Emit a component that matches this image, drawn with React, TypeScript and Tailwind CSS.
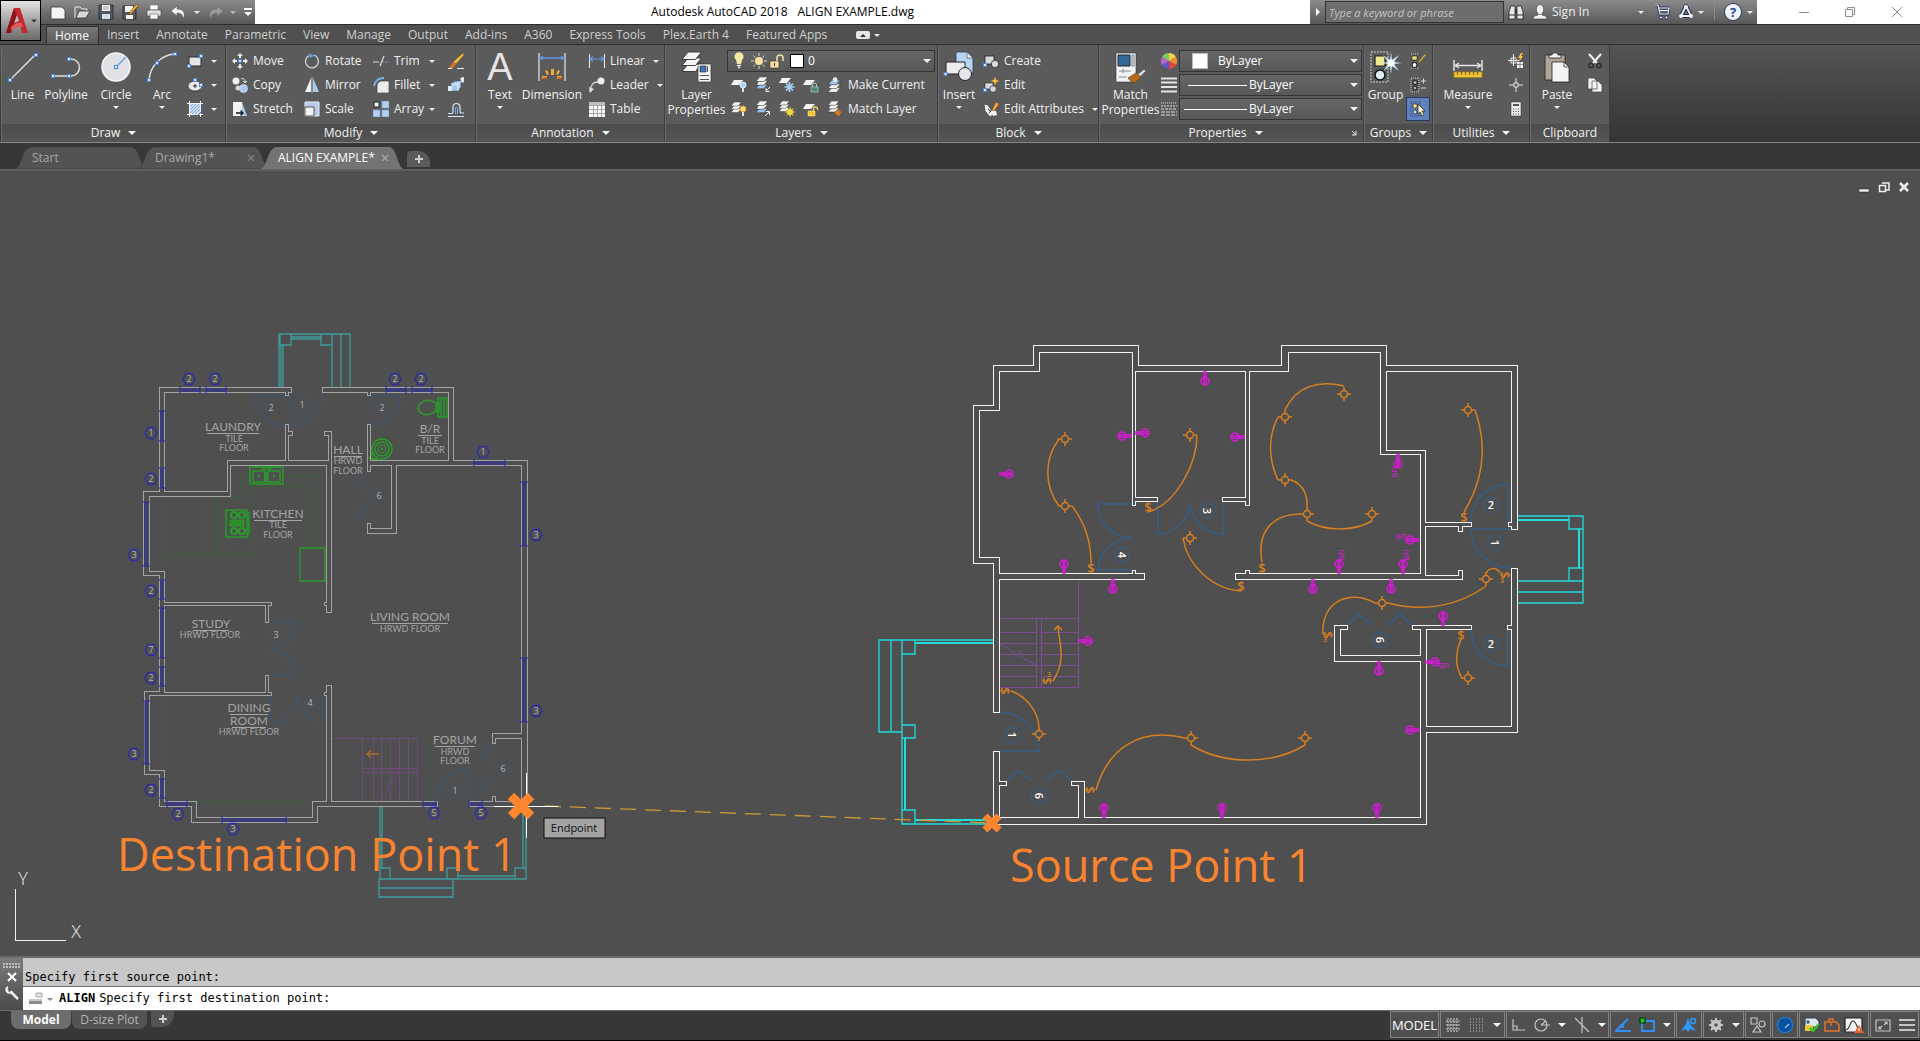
import { useState, type ReactNode } from "react";

/* ---------- small helpers ---------- */

function Caret({ big = false }: { big?: boolean }) {
  return big ? (
    <svg viewBox="0 0 8 4" className="h-1 w-2 shrink-0" fill="#f4f4f4"><path d="M0 0h8L4 4z" /></svg>
  ) : (
    <svg viewBox="0 0 6 3" className="h-[3px] w-1.5 shrink-0" fill="#ececec"><path d="M0 0h6L3 3z" /></svg>
  );
}

function Ico({ children, size = 16 }: { children: ReactNode; size?: 16 | 32 }) {
  return (
    <svg viewBox={`0 0 ${size} ${size}`} className={size === 32 ? "h-8 w-8 shrink-0" : "h-4 w-4 shrink-0"} fill="none">
      {children}
    </svg>
  );
}

function Grip({ x, y }: { x: number; y: number }) {
  return <rect x={x - 1.5} y={y - 1.5} width="3" height="3" fill="#dbe9ff" stroke="#4f86d9" />;
}

function Sheets({ blue = -1, s = 1, x = 0, y = 0 }: { blue?: number; s?: number; x?: number; y?: number }) {
  return (
    <g transform={`translate(${x} ${y}) scale(${s})`} stroke="#2f2f2f" strokeWidth=".6">
      {[2, 1, 0].map((i) => (
        <path key={i} d={`M4 ${i * 4}h9l-4 5H0z`} fill={blue === i ? "#9cc4f2" : "#f5f5f5"} />
      ))}
    </g>
  );
}

/* ---------- ribbon icons ---------- */

const icons: Record<string, ReactNode> = {
  line: <><path d="M3 29L29 3" stroke="#e8e8e8" strokeWidth="1.3" /><Grip x={3} y={29} /><Grip x={29} y={4} /></>,
  polyline: <><path d="M3 25h18a8.5 8.500 0 0 0 0-17h-2" stroke="#e0e0e0" strokeWidth="1.5" /><Grip x={3} y={25} /><Grip x={19} y={25} /><Grip x={19} y={8} /></>,
  circle: <><circle cx="16" cy="16" r="14" fill="#dfe1e4" stroke="#f6f6f6" strokeWidth="1.5" /><path d="M16 16l10-10" stroke="#6a9fe6" strokeWidth="1.5" /><Grip x={16} y={16} /></>,
  arc: <><path d="M3 29C4 16 14 4 29 3" stroke="#e0e0e0" strokeWidth="1.5" /><Grip x={3} y={29} /><Grip x={11} y={12} /><Grip x={29} y={3} /></>,
  rect: <><rect x="2" y="4" width="12" height="9" fill="#e4e5e8" stroke="#2d2d2d" /><Grip x={2} y={13} /><Grip x={14} y={3} /></>,
  ellipse: <><ellipse cx="8" cy="9" rx="7" ry="5" fill="#e8e8e8" stroke="#2d2d2d" strokeWidth=".7" /><path d="M8 7v4M6 9h4" stroke="#333" /><Grip x={8} y={3} /><Grip x={14} y={8} /></>,
  hatch: <><rect x="3" y="3" width="10" height="10" fill="#cfe2fb" /><path d="M3 6l3-3M3 9l6-6M3 12l9-9M5 13l8-8M8 13l5-5" stroke="#6fa0df" strokeWidth=".9" /><path d="M2.500 0v16M13.500 0v16M0 2.500h16M0 13.500h16" stroke="#f0f0f0" /><path d="M9 16l7-7" stroke="#3c70bd" /></>,
  move: <><path d="M8 0l3 3H9v2H7V3H5zM8 16l3-3H9v-2H7v2H5zM0 8l3-3v2h2v2H3v2zM16 8l-3-3v2h-2v2h2v2z" fill="#ededed" /><Grip x={8} y={8} /></>,
  rotate: <><path d="M10 2.200a6.500 6.500 0 1 1-5 .4" stroke="#d4d4d4" strokeWidth="1.300" /><path d="M5 0l5 2.500-4 3z" fill="#5f9be8" /></>,
  trim: <><path d="M0 9h6M7 13l4-10" stroke="#dedede" strokeWidth="1.200" /><path d="M9 9h7" stroke="#6ca1e8" strokeWidth="1.200" strokeDasharray="2 1" /></>,
  erase: <><path d="M15 0l1 2-8 9-3-2z" fill="#f0bd4b" stroke="#7a4d10" strokeWidth=".5" /><path d="M5 9l3 2-3 4H1z" fill="#d4702b" /><path d="M0 15.500h4M9 15.500h7" stroke="#eee" /></>,
  copy: <><circle cx="4" cy="4" r="3.500" fill="#f2f2f2" /><circle cx="6" cy="11" r="2.500" fill="#d4d8df" /><circle cx="11.500" cy="11.500" r="4" fill="#a9c8f0" stroke="#e4eefc" strokeWidth=".6" /><path d="M9 2c3-1 4 0 4 3M11 4l2 2 2-2" stroke="#e6e6e6" /></>,
  mirror: <><path d="M7 1v14H1z" fill="#f0f0f0" /><path d="M9 1v14h6z" fill="#a8c9ee" /><path d="M8 0v16" stroke="#d7d7d7" strokeWidth=".7" /></>,
  fillet: <><path d="M4 16V9c0-3 2-5 5-5h7v12z" fill="#ececec" stroke="#2a2a2a" strokeWidth=".6" /><path d="M1 9C2 4 5 1 11 1" stroke="#79aef0" strokeWidth="2" /></>,
  explode: <><path d="M3 7l4-3h6v6l-3 4H3z" fill="#a8c8ee" stroke="#3c5e88" strokeWidth=".6" /><path d="M3 7h7v7M10 7l3-3" stroke="#fff" strokeWidth=".8" /><path d="M12 1l4-1v5l-2 1zM0 9h4v5H0z" fill="#dfeaf8" /></>,
  stretch: <><path d="M1 1h9v14H1z" fill="#f4f4f4" /><path d="M10 1l5 14h-5z" fill="#9fcbf2" /><path d="M4 12h7M8.500 9.500L11 12l-2.500 2.500" stroke="#111" strokeWidth="1.300" /></>,
  scale: <><path d="M1 1h14v14H1z" fill="#b9cbe8" stroke="#e8eefa" /><path d="M1 6h9v9H1z" fill="#f2f2f2" stroke="#333" strokeWidth=".8" /></>,
  array: <><path d="M1 1h5v5H1z" fill="#f4f4f4" stroke="#222" /><path d="M9 0h7v7H9zM0 9h7v7H0zM9 9h7v7H9z" fill="#b3cfef" stroke="#7da7db" strokeWidth=".7" /></>,
  offset: <><path d="M0 15.500h16M0 12.500h4c1 0 1-1 1-2V6a3.500 3.500 0 0 1 7 0v4c0 1 0 2 1 2h3" stroke="#d9e8fc" strokeWidth="1.200" /><path d="M7.500 13V6.500a1.500 1.500 0 0 1 2 0V13" stroke="#78a9e6" /></>,
  dimension: <><path d="M3 2v28M29 2v28" stroke="#e8e8e8" strokeWidth="1.200" /><path d="M4 7h24M7 5L4 7l3 2M25 5l3 2-3 2" stroke="#5d97ea" strokeWidth="1.300" /><g fill="#f2a93b"><path d="M15 18h3v6h-3zM9 20l2-1 2 4-2 1zM22 19l2 1-2 4-2-1zM6 25h5v3H6zM21 25h5v3h-5z" /></g><path d="M7 27h4M22 27h4" stroke="#d8631c" strokeWidth="2" /></>,
  linear: <><path d="M.5 1v14M15.500 1v14" stroke="#ededed" /><path d="M1 6h14M4 3.500L1 6l3 2.500M12 3.500L15 6l-3 2.500" stroke="#5f9be8" strokeWidth="1.200" /></>,
  leader: <><path d="M1 15c1-6 2-10 8-10" stroke="#d5d5d5" strokeWidth="1.300" /><path d="M0 10l1 6 4-4z" fill="#ddd" /><circle cx="12" cy="4" r="3.500" fill="#f0f0f0" /></>,
  table: <><path d="M0 1h16v15H0z" fill="#f6f6f6" /><path d="M0 1h16v3H0z" fill="#bdbdbd" /><path d="M0 4.500h16M0 8.500h16M0 12.500h16M4.500 4v12M8.500 4v12M12.500 4v12" stroke="#8b8b8b" strokeWidth=".7" /></>,
  layerProps: <><Sheets s={1.500} x={1} y={1} /><path d="M17 13h13v18H17z" fill="#f4f4f4" stroke="#333" strokeWidth=".7" /><path d="M19 15h6v6h-6z" fill="#3f77b8" stroke="#222" strokeWidth=".6" /><path d="M26.500 15v6M19 24.500h9M19 28.500h9" stroke="#555" /></>,
  layOff: <><path d="M3 3h9l-4 5H0z" fill="#f5f5f5" /><circle cx="12" cy="8" r="3" fill="#a9d3fa" stroke="#e9f4ff" /><path d="M12 11v4" stroke="#e2e2e2" strokeWidth="2" /></>,
  layIso: <><Sheets s={0.9} blue={2} x={1} y={0} /><path d="M15 10l-4 4M11 11v3.500h3.500" stroke="#ededed" /></>,
  layFrz: <><path d="M3 1h9l-4 5H0z" fill="#f5f5f5" /><path d="M10.500 5v10M5.500 10h10M7 6.500l7 7M14 6.500l-7 7" stroke="#a9cff6" strokeWidth="1.700" /></>,
  layLock: <><path d="M3 3h9l-4 5H0z" fill="#f5f5f5" /><path d="M8 10h7v5H8z" fill="#56867d" stroke="#a9cfc6" strokeWidth=".7" /><path d="M9.500 10V8a2 2 0 0 1 4 0v2" stroke="#a9cfc6" /></>,
  layCur: <><Sheets s={0.95} blue={0} y={3} x={1} /><circle cx="8" cy="2.500" r="2.300" fill="#e4ebf3" /></>,
  layOn: <><Sheets s={0.8} y={1} /><circle cx="12" cy="8" r="3" fill="#ffe28a" stroke="#f0921f" /><path d="M12 11v4" stroke="#e2e2e2" strokeWidth="2" /></>,
  layUniso: <><Sheets s={0.9} blue={2} x={1} y={0} /><path d="M10 15l4.500-4.500M11 10.500h3.500V14" stroke="#ededed" /></>,
  layThaw: <><Sheets s={0.8} y={0} /><circle cx="11" cy="11" r="3" fill="#ffe45e" /><path d="M11 6v10M6 11h10M7.500 7.500l7 7M14.500 7.500l-7 7" stroke="#f7d12f" /></>,
  layUnlock: <><path d="M3 3h9l-4 5H0z" fill="#f5f5f5" /><path d="M5 10h7v5H5z" fill="#f7c42f" stroke="#fff0b0" strokeWidth=".5" /><path d="M10.500 10V8a2 2 0 0 1 4 0v1" stroke="#f7d260" strokeWidth="1.300" /></>,
  layMatch: <><Sheets s={0.85} x={1} /><path d="M7 12l4-4 4 3-3 5z" fill="#c77a33" stroke="#7d4717" strokeWidth=".5" /></>,
  insert: <><path d="M13 1h11l6 6v15H13z" fill="#b9d3f2" stroke="#2a3c55" strokeWidth=".8" /><path d="M24 1v6h6z" fill="#f0f6fd" stroke="#2a3c55" strokeWidth=".6" /><path d="M3 11h19v12H3z" fill="#ececee" stroke="#222" /><circle cx="22" cy="23" r="6.500" fill="#e5e6ea" stroke="#222" /><Grip x={2.500} y={23} /></>,
  create: <><path d="M2 3h9v8H2z" fill="#d8dade" stroke="#222" strokeWidth=".8" /><circle cx="12" cy="11" r="3.700" fill="#d9dbe0" stroke="#222" strokeWidth=".8" /><Grip x={2} y={12} /></>,
  editBlock: <><path d="M2 6h8v6H2z" fill="#d8dade" stroke="#222" strokeWidth=".6" /><circle cx="10" cy="12" r="3.300" fill="#cfd6e2" stroke="#222" strokeWidth=".6" /><path d="M12 0l1 3 3 1-3 1-1 3-1-3-3-1 3-1z" fill="#ffcf4a" stroke="#e58f1c" strokeWidth=".5" /><Grip x={2} y={13} /></>,
  editAttr: <><path d="M1 3l4 1 6 9-4 3-5-6z" fill="#f0f0f0" stroke="#222" strokeWidth=".6" /><path d="M8 9l5 1 1 4-4 1z" fill="#f5f5f5" /><path d="M5 8l3 3M6 12l7-9" stroke="#333" /><path d="M13 1l3 2-5 7-2-1z" fill="#f0a94a" stroke="#8a4d15" strokeWidth=".5" /></>,
  matchProps: <><path d="M1 2h20v29H1z" fill="#f2f3f5" stroke="#333" strokeWidth=".6" /><path d="M3 4h12v11H3z" fill="#34699f" stroke="#222" /><path d="M17 4h2v11h-2zM4 20h12M4 26h8M8 18v4" stroke="#8b8f96" strokeWidth="1.200" /><path d="M29 18l2 2-6 6-3-2z" fill="#d7d7d7" stroke="#444" strokeWidth=".6" /><path d="M13 27l8-5 5 4-6 6c-3-1-5-2-7-5z" fill="#b5681f" stroke="#6f3d10" strokeWidth=".7" /></>,
  wheel: <><path d="M8 8V0a8 8 0 0 1 7 4z" fill="#f3d34a" /><path d="M8 8l7-4a8 8 0 0 1 0 8z" fill="#f08a3c" /><path d="M8 8l7 4a8 8 0 0 1-7 4z" fill="#e0483c" /><path d="M8 8v8a8 8 0 0 1-7-4z" fill="#5a57c9" /><path d="M8 8l-7 4a8 8 0 0 1 0-8z" fill="#b565c8" /><path d="M8 8L1 4a8 8 0 0 1 7-4z" fill="#7cc864" /></>,
  weights: <path d="M0 1.500h16M0 5.500h16M0 10h16M0 14.500h16" stroke="#e3e3e3" strokeWidth="2" />,
  types: <><path d="M0 2h16" stroke="#e3e3e3" strokeDasharray="1 1" /><path d="M0 5h16" stroke="#e3e3e3" strokeDasharray="2 1" /><path d="M0 8h16" stroke="#e3e3e3" strokeDasharray="3 1" /><path d="M0 11h16M0 14h16" stroke="#e3e3e3" strokeDasharray="4 1" /></>,
  group: <><path d="M1 1h17v30H1z" stroke="#cfcfcf" strokeDasharray="2 1" /><path d="M5 5h10v10H5z" fill="#f0e690" stroke="#222" strokeWidth="1.200" /><circle cx="10" cy="24" r="5" fill="#dcecf2" stroke="#111" strokeWidth="1.500" /><path d="M13 19l6-6" stroke="#111" /><path d="M21 1l1 8 7-5-5 7 8 1-8 1 5 7-7-5-1 8-1-8-7 5 5-7-8-1 8-1-5-7 7 5z" fill="#c8e5fb" /><circle cx="21" cy="12" r="3.500" fill="#fff" /></>,
  ungroup: <><path d="M1 1h7M1 15h7" stroke="#ccc" strokeDasharray="1 1" /><path d="M2 3h5v4H2z" fill="#f0e07a" stroke="#222" strokeWidth=".6" /><circle cx="4.500" cy="12" r="2.500" fill="#eef6f8" stroke="#111" /><path d="M15 1l1 1-6 7-2 1 1-2z" fill="#f5c45c" stroke="#855515" strokeWidth=".5" /></>,
  groupEdit: <><path d="M1 1h8v14H1z" stroke="#ccc" strokeDasharray="1 1" /><path d="M3 4h4v3H3z" fill="#ddd" stroke="#111" /><circle cx="5" cy="11" r="2" fill="#8fb7ea" stroke="#111" /><path d="M11 4h5M13.500 1.500v5M11 11h5" stroke="#d9d9d9" /></>,
  groupSel: <><path d="M1 1h9v14H1z" stroke="#25406d" strokeDasharray="1 1" /><path d="M3 3h4v4H3z" fill="#f0e68a" stroke="#223" strokeWidth=".7" /><circle cx="5" cy="11" r="2" fill="#bfe0e4" stroke="#223" strokeWidth=".7" /><path d="M8 3v10l2-2 2 4 2-1-2-4h3z" fill="#f7efb5" stroke="#222" strokeWidth=".7" /></>,
  measure: <><path d="M2 9v11M30 9v11" stroke="#e6e6e6" strokeWidth="1.400" /><path d="M3 14.500h26M7 12l-4 2.500L7 17M25 12l4 2.500-4 2.500" stroke="#e6e6e6" strokeWidth="1.300" /><path d="M2 21h28v5.500H2z" fill="#f4c637" stroke="#a87d14" strokeWidth=".7" /><path d="M5.500 21v3M9.500 21v3M13.500 21v3M17.500 21v3M21.500 21v3M25.500 21v3" stroke="#7a5a0c" /></>,
  quickSel: <><path d="M5.500 1v12M0 7.500h11M3 5h5v5H3z" stroke="#ececec" /><path d="M13 0l-3 5h2l-1 4 4-6h-2l2-3z" fill="#ffc23c" /><path d="M9 9h6v6H9z" fill="#f3f3f3" /><path d="M9 11.500h6M12 9v6" stroke="#666" strokeWidth=".7" /></>,
  point: <><path d="M8 1v14M1 8h14" stroke="#e6e6e6" /><path d="M6 6h4v4H6z" stroke="#e6e6e6" fill="#5a5a5a" /></>,
  calc: <><path d="M3 1h10v14H3z" fill="#ededed" stroke="#333" strokeWidth=".5" /><path d="M5 3h6v2H5z" fill="#555" /><path d="M5 8h6M5 10.500h6M5 13h6" stroke="#444" strokeDasharray="1 1.500" /></>,
  paste: <><path d="M4 4h20v25H4z" fill="#b0a497" stroke="#222" strokeWidth=".8" /><path d="M8 4h3c0-3 6-3 6 0h3v3H8z" fill="#f0f0f0" stroke="#222" strokeWidth=".8" /><path d="M11 11h12l5 5v15H11z" fill="#f4f4f6" stroke="#222" strokeWidth=".8" /><path d="M23 11v5h5" stroke="#333" strokeWidth=".8" /></>,
  cut: <><path d="M2 1l8 9M14 1L6 10" stroke="#f4f4f4" strokeWidth="2" /><circle cx="4" cy="12.500" r="2.200" stroke="#292929" strokeWidth="1.300" /><circle cx="12" cy="12.500" r="2.200" stroke="#292929" strokeWidth="1.300" /></>,
  copyClip: <path d="M1 1h6l3 3v8H1zM5 4h6l4 4v7H5z" fill="#f3f3f3" stroke="#444" strokeWidth=".7" />,
  newDoc: <path d="M1 3h11l3 3v9H1z" fill="#f4f4f4" stroke="#333" strokeWidth=".8" />,
  open: <><path d="M1 14V3h5l2 2h5v2" stroke="#e9e9e9" fill="#777" /><path d="M2 14l3-7h11l-4 7z" fill="#d5d7da" stroke="#222" strokeWidth=".7" /></>,
  save: <><path d="M1 1h14v14H1z" fill="#55595f" stroke="#20252d" strokeWidth=".8" /><path d="M4 1h8v6H4z" fill="#f6f6f6" /><path d="M4 10h8v5H4z" fill="#cfe0f2" /><path d="M5 3h6M5 5h6" stroke="#777" strokeWidth=".7" /></>,
  saveAs: <><path d="M1 2h13v13H1z" fill="#55595f" stroke="#20252d" strokeWidth=".8" /><path d="M3 2h8v6H3zM4 11h7v4H4z" fill="#f2f2f2" /><path d="M14 0l2 2-7 8-2 1 1-3z" fill="#f5b13b" stroke="#5e3a07" strokeWidth=".6" /></>,
  print: <><path d="M4 1h8v5H4z" fill="#fff" stroke="#777" strokeWidth=".6" /><path d="M1 6h14v6H1z" fill="#dfe1e5" stroke="#333" strokeWidth=".6" /><path d="M4 10h8v5H4z" fill="#f8f8f8" stroke="#555" strokeWidth=".6" /></>,
  undo: <path d="M7 2L1 7l6 5V9c4 0 6 2 6 6 3-5 1-10-6-10z" fill="#f2f2f2" stroke="#444" strokeWidth=".5" />,
  redo: <path d="M9 2l6 5-6 5V9c-4 0-6 2-6 6-3-5-1-10 6-10z" fill="#9b9b9b" stroke="#666" strokeWidth=".5" />,
  binoc: <><path d="M3 2h4v13H1V8zM9 2h4l2 6v7H9z" fill="#e9e9e9" stroke="#222" strokeWidth=".8" /><path d="M7 5h2v4H7z" fill="#333" /><path d="M1 11h6M9 11h6" stroke="#333" /></>,
  person: <><path d="M1 15c0-3 3-3.500 5-4l-1-2h6l-1 2c2 .5 5 1 5 4z" fill="#f2f2f2" stroke="#333" strokeWidth=".6" /><ellipse cx="8" cy="5.500" rx="3.700" ry="5" fill="#f2f2f2" stroke="#333" strokeWidth=".6" /></>,
  cart: <><path d="M1 1h3l2 9h8l1-6H5" stroke="#27335a" strokeWidth="3" /><path d="M1 1h3l2 9h8l1-6H5M5 6.500h9" stroke="#f4f4f8" strokeWidth="1.200" /><circle cx="7" cy="13.500" r="1.500" fill="#f4f4f8" stroke="#27335a" /><circle cx="12.500" cy="13.500" r="1.500" fill="#f4f4f8" stroke="#27335a" /></>,
  exchange: <><path d="M8 2L3 12h10z" stroke="#27335a" strokeWidth="4" strokeLinejoin="round" /><path d="M8 2L3 12h10z" stroke="#eff1f8" strokeWidth="1.800" strokeLinejoin="round" /><circle cx="8" cy="3" r="2" fill="#eff1f8" /><circle cx="3" cy="12" r="2" fill="#eff1f8" /><circle cx="13" cy="12" r="2" fill="#eff1f8" /></>,
};

function Small({ name, label, caret, className = "" }: { name: string; label?: string; caret?: boolean; className?: string }) {
  return (
    <button aria-label={label ?? name} className={`flex h-6 items-center whitespace-nowrap hover:bg-[#6c6c6c] ${className}`}>
      <Ico>{icons[name]}</Ico>
      {label && <span className="pl-[5px]">{label}</span>}
      {caret && <span className="pl-2"><Caret /></span>}
    </button>
  );
}

function Big({ name, lines, caret, className }: { name: string; lines: string[]; caret?: boolean; className: string }) {
  return (
    <button className={`flex shrink-0 flex-col items-center self-start pt-1.5 leading-[15px] hover:bg-[#6c6c6c] ${className}`}>
      {name === "text" ? (
        <span className="h-8 font-['Liberation_Sans',sans-serif] text-[38px] leading-8 text-[#e4e4e4]">A</span>
      ) : (
        <Ico size={32}>{icons[name]}</Ico>
      )}
      <span className="mt-1 flex flex-col items-center whitespace-nowrap">
        {lines.map((l) => <span key={l}>{l}</span>)}
      </span>
      {caret && <span className="mt-1"><Caret /></span>}
    </button>
  );
}

function Panel({ title, caret = true, launcher, className, children }: { title: string; caret?: boolean; launcher?: boolean; className: string; children: ReactNode }) {
  return (
    <section className={`flex shrink-0 flex-col border-r border-[#3e3e3e] ${className}`}>
      <div className="flex h-[79px] border-l border-[#6a6a6a] bg-[#5b5b5b]">{children}</div>
      <div className="flex h-[18px] items-center border-l border-[#6a6a6a] bg-linear-to-b from-[#4c4c4c] to-[#555]">
        <button className="flex flex-1 items-center justify-center gap-2">
          {title}
          {caret && <Caret big />}
        </button>
        {launcher && (
          <button aria-label="Properties palette" className="pr-1.5">
            <svg viewBox="0 0 6 6" className="h-1.5 w-1.5" fill="none" stroke="#eee"><path d="M1 1l4 4M5 1v4H1" /></svg>
          </button>
        )}
      </div>
    </section>
  );
}

function Combo({ label, value, className = "", children }: { label: string; value: string; className?: string; children?: ReactNode }) {
  return (
    <label className={`flex h-[22px] items-center border border-[#343434] bg-linear-to-b from-[#676767] to-[#585858] pr-[3px] ${className}`}>
      {children}
      <select aria-label={label} className="min-w-0 flex-1 appearance-none bg-transparent text-white outline-none">
        <option>{value}</option>
      </select>
      <Caret big />
    </label>
  );
}

/* ---------- title bar and ribbon ---------- */

function TitleBar() {
  return (
    <header className="flex h-6 bg-white text-black">
      <div className="flex w-[255px] shrink-0 items-center bg-linear-to-b from-[#8b8b8b] to-[#585858] pl-[50px]">
        <div className="flex items-center gap-2">
          {["newDoc", "open", "save", "saveAs", "print", "undo"].map((n) => (
            <button key={n} aria-label={n}><Ico>{icons[n]}</Ico></button>
          ))}
        </div>
        <span className="pr-2 pl-2"><Caret /></span>
        <button aria-label="Redo"><Ico>{icons.redo}</Ico></button>
        <span className="pr-2 pl-1.5 opacity-60"><Caret /></span>
        <button aria-label="Customize toolbar" className="flex flex-col items-center gap-0.5">
          <span className="h-0.5 w-2 bg-white" />
          <Caret big />
        </button>
      </div>
      <h1 className="flex flex-1 items-center justify-center gap-2.5 whitespace-nowrap">
        <span>Autodesk AutoCAD 2018</span>
        <span>ALIGN EXAMPLE.dwg</span>
      </h1>
      <div className="flex w-[447px] shrink-0 items-center bg-linear-to-b from-[#8b8b8b] to-[#585858] text-[#ededed]">
        <button aria-label="Collapse search" className="flex w-[15px] justify-center">
          <svg viewBox="0 0 4 8" className="h-2 w-1" fill="#fff"><path d="M0 0l4 4-4 4z" /></svg>
        </button>
        <input aria-label="Search" placeholder="Type a keyword or phrase" className="h-[22px] w-[179px] border border-[#333] bg-[#6d6d6d] px-[3px] text-[11px] italic outline-none placeholder:text-[#c4c4c4]" />
        <button aria-label="Find" className="ml-1"><Ico>{icons.binoc}</Ico></button>
        <button className="ml-2 flex items-center gap-1"><Ico>{icons.person}</Ico>Sign In</button>
        <span className="ml-auto"><Caret /></span>
        <button aria-label="App store" className="ml-2.5"><Ico>{icons.cart}</Ico></button>
        <button aria-label="Exchange" className="mr-1 ml-2"><Ico>{icons.exchange}</Ico></button>
        <Caret />
        <span className="mx-2.5 h-4 w-px bg-[#8c8c8c]" />
        <button aria-label="Help" className="mr-1.5 h-4 w-4 rounded-full bg-[#f1f4fa] text-[13px] leading-4 font-bold text-[#26488f] ring-1 ring-[#2c3d63]">?</button>
        <span className="pr-1"><Caret /></span>
      </div>
      <div className="flex w-[163px] shrink-0 items-center justify-around pl-6 text-[#8e8e8e]">
        <button aria-label="Minimize" className="w-9"><svg viewBox="0 0 10 10" className="mx-auto h-2.5 w-2.5" stroke="currentColor"><path d="M0 5.500h10" /></svg></button>
        <button aria-label="Restore" className="w-9"><svg viewBox="0 0 10 10" className="mx-auto h-2.5 w-2.5" fill="none" stroke="currentColor"><path d="M.5 2.500h7v7h-7zM2.500 2V.5h7v7H8" /></svg></button>
        <button aria-label="Close" className="w-9"><svg viewBox="0 0 10 10" className="mx-auto h-2.5 w-2.5" stroke="currentColor"><path d="M0 0l10 10M10 0L0 10" /></svg></button>
      </div>
    </header>
  );
}

const RIBBON_TABS = ["Home", "Insert", "Annotate", "Parametric", "View", "Manage", "Output", "Add-ins", "A360", "Express Tools", "Plex.Earth 4", "Featured Apps"];

function RibbonTabs() {
  const [active, setActive] = useState("Home");
  return (
    <nav className="flex h-5 items-end border-t border-[#2b2b2b] bg-[#505050] pl-[46px] text-[#cfcfcf]">
      {RIBBON_TABS.map((t) => (
        <button
          key={t}
          onClick={() => setActive(t)}
          className={`h-[18px] pr-[9px] pl-2 whitespace-nowrap ${
            t === active ? "border border-b-0 border-[#2f2f2f] bg-linear-to-b from-[#777] to-[#5b5b5b] text-white" : ""
          }`}
        >
          <span className="block leading-4">{t}</span>
        </button>
      ))}
      <button aria-label="Ribbon display" className="ml-5 flex h-[18px] items-center gap-1">
        <svg viewBox="0 0 14 8" className="h-2 w-3.5"><rect width="14" height="8" rx="2" fill="#e5e5e5" /><path d="M4 6l3-3 3 3z" fill="#333" /></svg>
        <Caret />
      </button>
    </nav>
  );
}

function Ribbon() {
  return (
    <div className="flex h-[99px] border-t border-b border-t-[#2f2f2f] border-b-[#858585] bg-linear-to-b from-[#555] to-[#343434] pl-px text-[#f1f1f1]">
      <Panel title="Draw" className="w-[225px]">
        <Big name="line" lines={["Line"]} className="w-[41px]" />
        <Big name="polyline" lines={["Polyline"]} className="w-[46px]" />
        <Big name="circle" lines={["Circle"]} caret className="w-[54px]" />
        <Big name="arc" lines={["Arc"]} caret className="w-[38px]" />
        <div className="flex flex-col pt-1 pl-1.5">
          <Small name="rect" caret />
          <Small name="ellipse" caret />
          <Small name="hatch" caret />
        </div>
      </Panel>
      <Panel title="Modify" className="w-[250px]">
        <div className="flex w-[77px] flex-col pt-1 pl-[5px]">
          <Small name="move" label="Move" />
          <Small name="copy" label="Copy" />
          <Small name="stretch" label="Stretch" />
        </div>
        <div className="flex w-[69px] flex-col pt-1">
          <Small name="rotate" label="Rotate" />
          <Small name="mirror" label="Mirror" />
          <Small name="scale" label="Scale" />
        </div>
        <div className="flex w-[75px] flex-col pt-1">
          {[["trim", "Trim"], ["fillet", "Fillet"], ["array", "Array"]].map(([n, l]) => (
            <button key={n} className="flex h-6 w-[62px] items-center">
              <Ico>{icons[n]}</Ico>
              <span className="flex-1 pl-[5px] text-left">{l}</span>
              <Caret />
            </button>
          ))}
        </div>
        <div className="flex flex-col pt-1">
          <Small name="erase" />
          <Small name="explode" />
          <Small name="offset" />
        </div>
      </Panel>
      <Panel title="Annotation" className="w-[189px]">
        <Big name="text" lines={["Text"]} caret className="w-[46px]" />
        <Big name="dimension" lines={["Dimension"]} className="w-[58px]" />
        <div className="flex flex-col pt-1 pl-2">
          <Small name="linear" label="Linear" caret />
          <Small name="leader" label="Leader" caret />
          <Small name="table" label="Table" />
        </div>
      </Panel>
      <Panel title="Layers" className="w-[273px]">
        <Big name="layerProps" lines={["Layer", "Properties"]} className="w-[61px]" />
        <div className="flex flex-1 flex-col pt-[5px] pr-0.5">
          <Combo label="Layer" value="0">
            <svg viewBox="0 0 60 18" className="ml-1 h-[18px] w-[60px]" fill="none">
              <path d="M4 8a4.500 4.500 0 1 1 6 0l-1 4H5z" fill="#f6e7a4" /><path d="M5 13.500h4M6 15.500h2" stroke="#e8e8e8" strokeWidth="1.500" />
              <circle cx="27" cy="9" r="4" fill="#f7e2a2" /><path d="M27 1v3M27 14v3M19 9h3M32 9h3M21.500 3.500l2 2M30.500 12.500l2 2M32.500 3.500l-2 2M23.500 12.500l-2 2" stroke="#d9d9d9" />
              <path d="M38 9h9v7h-9z" fill="#f7dfa0" stroke="#2d2d2d" strokeWidth=".6" /><path d="M45 9V6a3 3 0 0 1 6 0v3" stroke="#f0e0a8" strokeWidth="1.500" /><path d="M42.500 11v3" stroke="#333" />
            </svg>
            <span className="mr-1 -ml-0.5 h-3.5 w-3.5 border border-black bg-white" />
          </Combo>
          {[
            ["layOff", "layIso", "layFrz", "layLock", "layCur", "Make Current"],
            ["layOn", "layUniso", "layThaw", "layUnlock", "layMatch", "Match Layer"],
          ].map((row) => (
            <div key={row[5]} className="flex h-6 items-center gap-2 pl-1 first-of-type:mt-px">
              {row.slice(0, 4).map((n) => <Small key={n} name={n} />)}
              <Small name={row[4]} label={row[5]} />
            </div>
          ))}
        </div>
      </Panel>
      <Panel title="Block" className="w-[161px]">
        <Big name="insert" lines={["Insert"]} caret className="w-[40px]" />
        <div className="flex flex-col pt-1 pl-1">
          <Small name="create" label="Create" />
          <Small name="editBlock" label="Edit" />
          <Small name="editAttr" label="Edit Attributes" caret />
        </div>
      </Panel>
      <Panel title="Properties" launcher className="w-[265px]">
        <Big name="matchProps" lines={["Match", "Properties"]} className="w-[61px]" />
        <div className="flex flex-1 flex-col gap-0.5 pt-[5px] pr-px">
          <div className="flex items-center gap-0.5">
            <Ico>{icons.wheel}</Ico>
            <Combo label="Color" value="ByLayer" className="flex-1"><span className="mr-2.5 ml-3 h-4 w-4 border border-[#bbb] bg-white" /></Combo>
          </div>
          <div className="flex items-center gap-0.5">
            <Ico>{icons.weights}</Ico>
            <Combo label="Lineweight" value="ByLayer" className="flex-1"><span className="mr-0.5 ml-2 h-px w-[59px] bg-white" /></Combo>
          </div>
          <div className="flex items-center gap-0.5">
            <Ico>{icons.types}</Ico>
            <Combo label="Linetype" value="ByLayer" className="flex-1"><span className="mr-0.5 ml-1 h-px w-[63px] bg-white" /></Combo>
          </div>
        </div>
      </Panel>
      <Panel title="Groups" className="w-[69px]">
        <Big name="group" lines={["Group"]} className="w-[41px]" />
        <div className="flex flex-col items-center pt-1">
          <Small name="ungroup" className="w-6 justify-center" />
          <Small name="groupEdit" className="w-6 justify-center" />
          <Small name="groupSel" className="w-6 justify-center border border-[#23395f] bg-[#5f82bd]" />
        </div>
      </Panel>
      <Panel title="Utilities" className="w-[97px]">
        <Big name="measure" lines={["Measure"]} caret className="w-[68px]" />
        <div className="flex flex-col pt-1 pl-1.5">
          <Small name="quickSel" />
          <Small name="point" />
          <Small name="calc" />
        </div>
      </Panel>
      <Panel title="Clipboard" caret={false} className="w-[80px]">
        <Big name="paste" lines={["Paste"]} caret className="w-[52px]" />
        <div className="flex flex-col pt-1 pl-1">
          <Small name="cut" />
          <Small name="copyClip" />
        </div>
      </Panel>
    </div>
  );
}

/* ---------- file tabs ---------- */

function FileTab({ name, width, active, close = true }: { name: string; width: number; active?: boolean; close?: boolean }) {
  return (
    <div className={`relative flex h-[22px] items-center pl-[17px] ${active ? "z-10 text-white" : "text-[#a9a9a9]"}`} style={{ width }}>
      <svg viewBox={`0 0 ${width} 22`} className="absolute inset-0 h-full w-full">
        <path d={`M0 22C7 20 6 2 16 0H${width - 14}C${width - 6} 2 ${width - 6} 20 ${width} 22z`} fill={active ? "#737373" : "#535353"} stroke={active ? "#7d7d7d" : "#3c3c3c"} strokeWidth=".7" />
      </svg>
      <button className="relative whitespace-nowrap">{name}</button>
      {close && (
        <button aria-label={`Close ${name}`} className="relative mr-3.5 ml-auto">
          <svg viewBox="0 0 8 8" className="h-2 w-2" stroke={active ? "#a4a4a4" : "#7d7d7d"} strokeWidth="1.500"><path d="M1 1l6 6M7 1L1 7" /></svg>
        </button>
      )}
    </div>
  );
}

function FileTabs() {
  return (
    <div className="flex h-7 items-start border-b-2 border-[#5f5f5f] bg-[#373737] pt-1 pl-[15px]">
      <FileTab name="Start" width={131} close={false} />
      <div className="-ml-2 flex"><FileTab name="Drawing1*" width={131} /></div>
      <div className="-ml-2 flex"><FileTab name="ALIGN EXAMPLE*" width={142} active /></div>
      <button aria-label="New tab" className="mt-1 ml-1 flex h-4 w-[23px] items-center justify-center rounded-tl-sm rounded-tr-xl bg-[#5b5b5b]">
        <svg viewBox="0 0 8 8" className="h-2 w-2" stroke="#cfcfcf" strokeWidth="2"><path d="M4 0v8M0 4h8" /></svg>
      </button>
    </div>
  );
}

/* ---------- drawing ---------- */

type Tag = [number, number, string];

const HEX_TAGS: Tag[] = [
  [189, 380, "2"], [215, 380, "2"], [395, 380, "2"], [421, 380, "2"], [151, 434, "1"], [151, 480, "2"], [134, 556, "3"],
  [151, 592, "2"], [483, 453, "1"], [536, 536, "3"], [151, 651, "7"], [151, 679, "2"], [134, 755, "3"], [151, 791, "2"],
  [178, 815, "2"], [233, 830, "3"], [434, 814, "5"], [481, 814, "5"], [536, 712, "3"],
];

const DOOR_TAGS: Tag[] = [
  [271, 409, "2"], [302, 406, "1"], [382, 409, "2"], [379, 497, "6"], [276, 636, "3"], [310, 704, "4"], [455, 792, "1"], [503, 770, "6"],
];

// start x, start y, length
const WINDOWS_H = [
  [180, 388, 20], [206, 388, 20], [386, 388, 20], [412, 388, 20], [474, 461, 31], [167, 802, 20], [222, 818, 64], [423, 802, 13], [469, 802, 13],
];
const WINDOWS_V = [
  [159, 412, 30], [159, 469, 20], [159, 581, 19], [159, 609, 50], [159, 668, 19], [159, 780, 19], [143, 503, 64], [143, 702, 63], [521, 483, 64], [521, 659, 64],
];

// title, centre x, baseline, underline half width
const ROOMS: [string, number, number, number][] = [
  ["LAUNDRY", 233, 432, 26], ["B/R", 430, 434, 12], ["HALL", 348, 455, 14], ["KITCHEN", 278, 519, 24], ["LIVING ROOM", 410, 622, 38],
  ["STUDY", 211, 629, 18], ["DINING", 249, 713, 19], ["ROOM", 249, 726, 17], ["FORUM", 455, 745, 20],
];

const FLOORS: Tag[] = [
  [234, 443, "TILE"], [234, 452, "FLOOR"], [430, 445, "TILE"], [430, 454, "FLOOR"], [348, 465, "HRWD"], [348, 475, "FLOOR"],
  [278, 529, "TILE"], [278, 539, "FLOOR"], [410, 633, "HRWD FLOOR"], [210, 639, "HRWD FLOOR"], [249, 736, "HRWD FLOOR"],
  [455, 756, "HRWD"], [455, 765, "FLOOR"],
];

function LeftPlan() {
  return (
    <g fill="none">
      <g stroke="#3b5e3b" shapeRendering="crispEdges">
        <path d="M164 497V572M201 497V555M217 497V555M219 497V555M227 497V555M164 555H251V487H305V549M227 497H241V477H250M283 477H315V549M164 697V771M196 802H312" />
        <path d="M370 430H378L402 455V461" shapeRendering="auto" />
      </g>
      <g stroke="#425669" strokeWidth="1.500">
        <path d="M254 397H288M254 397A32 30 0 0 0 286 426M291 395V425M322 395A31 31 0 0 1 291 426M370 397H400A30 29 0 0 1 372 426M367 475L358 482L368 491M368 505L358 515L368 524" />
        <path d="M268 623H295A27 27 0 0 1 269 650A27 27 0 0 1 295 676H268M271 697V723A27 27 0 0 0 298 697A27 27 0 0 0 323 723V697M469 802V770A32 32 0 0 0 437 802M492 745L482 755L493 765M492 777L482 787L492 797" />
      </g>
      <g stroke="#3f9c9c" strokeWidth="1.300">
        <path d="M279 388V335H350V388M283 346V388M281 346V388M332 335V388M341 335V388M280 335h11v11h-11zM321 335h11v11h-11zM291 338H321M291 340H321" />
        <path d="M380 807V869M382 807V869M380 869h10v11h-10zM380 880H526M447 869h11v11h-11zM515 869h11v11h-11zM458 877H515M523 807V869M526 807V880M379 880H453V898H379zM379 889H453" />
      </g>
      <g stroke="#704a7c" shapeRendering="crispEdges">
        <path d="M331 739H417V802M362 739V802M373 739V802M381 739V802M390 739V802M399 739V802M408 739V802M362 769H417M362 773H417" />
        <path d="M381 802L389 788L387 785H393L391 782L399 773" shapeRendering="auto" />
      </g>
      <path d="M379 755H367M371 751L367 755L371 759" stroke="#b0692c" strokeWidth="1.300" />
      <g stroke="#2a9c2a">
        <path d="M300 549h25v33h-25z" strokeWidth="1.300" />
        <path d="M250 467h33v18h-33zM253 472h12v11h-12zM268 472h12v11h-12zM252 468h29M262 470h9v-3M266 473v10" strokeWidth="1.500" />
        <circle cx="259" cy="477" r="1" /><circle cx="274" cy="477" r="1" />
        <path d="M226 511h21v27h-21zM249 513v23" strokeWidth="1.500" />
        {[[234, 516], [242, 516], [234, 532], [242, 532]].map(([x, y]) => <circle key={`${x}${y}`} cx={x} cy={y} r="3" strokeWidth="2" />)}
        <path d="M230 521h14v6h-14z" fill="#2a8c2a" />
        <path d="M436 404C424 396 413 408 421 414C427 418 432 414 436 412zM436 404h3v9h-3M438 399h9v19h-9zM441 400v17M444 400v17" strokeWidth="1.500" />
        <circle cx="382" cy="450" r="10" strokeWidth="1.500" /><circle cx="382" cy="450" r="7" strokeWidth="1.500" /><circle cx="382" cy="450" r="4" /><circle cx="382" cy="450" r="1" />
        <path d="M372 454l-2 5 4 1 4 1" strokeWidth="2" />
      </g>
      <g stroke="#a3a3a3" shapeRendering="crispEdges">
        <path d="M159 492V388H291V393H288V396H285V393H164V492H227V461H285V425H288V432H292V436H288V461H328V436H324V432H331V613H326V606H324V603H326V466H230V497H149V572H164V603H271V606H268V623H265V606H164V693H265V676H268V693H271V696H149V771H164V802H196V818H312V802H326V696H324V693H326V686H331V802H437V807H317V823H191V807H159V775H144V692H159V576H143V492z" />
        <path d="M322 388H453V461H527V807H469V802H492V797H495V802H521V739H495V744H492V734H521V466H396V534H367V524H370V529H391V466H370V472H367V425H370V461H448V393H370V396H367V393H322z" />
      </g>
      <g stroke="#2b2ba6" strokeWidth="1">
        {WINDOWS_H.map(([x, y, n]) => (
          <path key={`${x}-${y}`} d={`M${x} ${y - 1}v8M${x + n} ${y - 1}v8M${x} ${y + 2}h${n}M${x} ${y + 4}h${n}`} />
        ))}
        {WINDOWS_V.map(([x, y, n]) => (
          <path key={`${x}-${y}`} d={`M${x - 1} ${y}h8M${x - 1} ${y + n}h8M${x + 2} ${y}v${n}M${x + 4} ${y}v${n}`} />
        ))}
      </g>
      {HEX_TAGS.map(([x, y, n]) => (
        <g key={`${x}-${y}`}>
          <path d={`M${x - 6} ${y}l3 -5.500h6l3 5.500l-3 5.500h-6z`} stroke="#2d2da8" strokeWidth="1.300" />
          <text x={x} y={y + 3} fill="#b5b5b5" fontSize="9" textAnchor="middle">{n}</text>
        </g>
      ))}
      {DOOR_TAGS.map(([x, y, n]) => (
        <g key={`${x}-${y}`}>
          <circle cx={x} cy={y} r="6" stroke="#425669" />
          <text x={x} y={y + 3} fill="#b5b5b5" fontSize="9" textAnchor="middle">{n}</text>
        </g>
      ))}
      <g fill="#a5a5a5" textAnchor="middle" fontFamily="Lato, sans-serif">
        {ROOMS.map(([t, x, y, half]) => (
          <g key={t}>
            <text x={x} y={y} fontSize="12">{t}</text>
            <path d={`M${x - half} ${y + 2}h${half * 2}`} stroke="#a5a5a5" shapeRendering="crispEdges" />
          </g>
        ))}
        {FLOORS.map(([x, y, t]) => <text key={`${x}-${y}`} x={x} y={y} fontSize="9">{t}</text>)}
      </g>
    </g>
  );
}

const LIGHTS = [
  [1065, 440], [1065, 507], [1190, 436], [1190, 539], [1344, 395], [1285, 418], [1285, 481], [1307, 515], [1372, 515],
  [1468, 411], [1486, 580], [1382, 604], [1039, 735], [1191, 739], [1305, 739], [1468, 679],
];

// x, y, rotation of the leads (0 = leads point down)
const OUTLETS = [
  [1205, 382, 180], [1122, 437, 270], [1145, 434, 90], [1235, 438, 270], [1009, 475, 90], [1064, 565, 0], [1113, 590, 180],
  [1398, 465, 180], [1410, 541, 270], [1339, 565, 0], [1403, 565, 0], [1313, 590, 180], [1391, 590, 180], [1443, 617, 0],
  [1088, 642, 90], [1104, 809, 0], [1222, 809, 0], [1377, 809, 0], [1379, 672, 180], [1435, 663, 90], [1410, 731, 270],
];

// x, y, rotation
const SWITCHES = [
  [1148, 508, 0], [1091, 569, 0], [1241, 587, 0], [1262, 569, 0], [1464, 518, 0], [1505, 576, 90], [1461, 636, 0],
  [1328, 636, 90], [1005, 692, 90], [1047, 682, 90], [1090, 791, 90],
];

const GFI = [[1395, 473, -90], [1401, 538, 0], [1342, 556, -90], [1407, 556, -90], [1444, 667, 0]];

const RIGHT_TAGS: [number, number, string, number][] = [
  [1122, 556, "4", 90], [1207, 512, "3", 90], [1491, 506, "2", 0], [1495, 544, "1", 90], [1380, 641, "6", 90],
  [1491, 645, "2", 0], [1012, 736, "1", 90], [1039, 797, "6", 90],
];

function RightPlan() {
  return (
    <g fill="none">
      <g stroke="#3c5b7a" strokeWidth="2">
        <path d="M1132 505H1098A34 34 0 0 0 1132 539A34 34 0 0 0 1098 571H1132M1158 502V535A33 33 0 0 0 1190 503A33 33 0 0 0 1223 535V502" />
        <path d="M1508 523V485A38 38 0 0 0 1471 523M1511 530H1471A40 40 0 0 0 1510 569M1347 627L1359 615L1372 627M1388 627L1400 615L1412 627M1507 630V667A37 37 0 0 1 1471 630" />
        <path d="M999 713A40 40 0 0 1 1039 752H999M1007 782L1018 771L1031 782M1047 782L1059 771L1071 782" />
      </g>
      {RIGHT_TAGS.map(([x, y, n, r]) => (
        <g key={`${x}-${y}`} transform={`rotate(${r} ${x} ${y})`}>
          <circle cx={x} cy={y} r="7.500" stroke="#3c5b7a" strokeWidth="1.500" />
          <text x={x} y={y + 4} fill="#fff" fontSize="11" fontWeight="600" textAnchor="middle">{n}</text>
        </g>
      ))}
      <g stroke="#7d4c92" shapeRendering="crispEdges">
        <path d="M1078 580V688H999M1036 619V688M1041 619V688M999 619H1078M999 633H1036M1041 633H1078M999 644H1036M1041 644H1078M999 655H1036M1041 655H1078M999 666H1036M1041 666H1078M999 677H1036M1041 677H1078" />
        <path d="M997 643L1015 654L1016 658L1020 652L1021 658L1040 668" shapeRendering="auto" />
      </g>
      <g stroke="#20dcdc" strokeWidth="1.300">
        <path d="M1517 517H1583V604H1517M1517 521H1569M1569 517h14v13h-14zM1579 530V569M1569 569h14v13h-14zM1517 582H1583M1517 593H1583" />
        <path d="M993 641H879V733H902M891 641V733M902 641V825H993M902 641h13v14h-13zM902 726h13v13h-13zM902 811h13v14h-13zM905 739V811M915 821H993" />
        <path d="M915 644H993M1579 530V569M1517 521H1569M905 739V811M915 821H993" strokeWidth="2" />
      </g>
      <g stroke="#f4f4f4" shapeRendering="crispEdges">
        <path d="M973 406H993V366H1033V346H1138V366H1281V346H1386V366H1517V530H1511V527H1508V523H1511V372H1386V451H1425V523H1471V527H1462V532H1458V527H1425V576H1458V571H1462V580H1235V574H1245V571H1249V574H1420V455H1380V353H1288V372H1249V506H1245V502H1222V498H1245V372H1135V498H1157V502H1135V506H1132V353H1039V372H999V411H979V558H999V574H1132V571H1135V574H1144V580H999V713H993V564H973z" />
        <path d="M993 825V752H999V782H1006V786H999V818H1078V786H1071V782H1084V818H1420V662H1334V626H1347V630H1340V656H1420V630H1412V626H1471V630H1426V727H1511V630H1507V626H1511V569H1517V733H1426V825z" />
      </g>
      <g stroke="#d87f20" strokeWidth="1.500">
        <path d="M1059 440C1044 460 1044 487 1059 507M1072 507C1086 525 1091 545 1091 564M1197 436C1197 465 1176 505 1148 513M1183 539C1187 565 1211 590 1241 592" />
        <path d="M1344 387C1320 381 1297 386 1285 411M1278 418C1268 437 1268 460 1278 481M1291 481C1303 485 1308 496 1307 509M1307 522C1325 532 1353 533 1372 522M1301 515C1275 515 1256 530 1262 563" />
        <path d="M1475 411C1487 445 1484 480 1464 513M1486 587C1460 606 1425 614 1388 604M1375 604C1350 590 1321 602 1323 635M1486 575C1488 568 1497 568 1500 574M1462 679C1455 668 1455 655 1461 640" />
        <path d="M1011 692C1026 697 1038 712 1039 728M1185 739C1140 728 1108 749 1096 791M1191 746C1223 766 1273 766 1305 746M1058 627C1059 645 1067 660 1053 682M1054 631L1058 627L1062 631" />
        {LIGHTS.map(([x, y]) => (
          <g key={`${x}-${y}`}>
            <circle cx={x} cy={y} r="3.500" />
            <path d={`M${x - 7} ${y}h3M${x + 4} ${y}h3M${x} ${y - 7}v3M${x} ${y + 4}v3`} />
          </g>
        ))}
      </g>
      <g fill="#d87f20" textAnchor="middle" fontSize="13" fontWeight="600">
        {SWITCHES.map(([x, y, r]) => (
          <text key={`${x}-${y}`} x={x} y={y + 5} transform={`rotate(${r} ${x} ${y})`}>$</text>
        ))}
        <text x="1049" y="678" fontSize="7">3</text>
        <text x="1502" y="584" fontSize="7">3</text>
        <text x="1325" y="643" fontSize="7">3</text>
      </g>
      <g stroke="#dc18dc" strokeWidth="1.500">
        {OUTLETS.map(([x, y, r]) => (
          <g key={`${x}-${y}`} transform={`rotate(${r} ${x} ${y})`}>
            <circle cx={x} cy={y} r="4" />
            <path d={`M${x - 1} ${y - 3}v13M${x + 1} ${y - 3}v13`} />
          </g>
        ))}
      </g>
      <g fill="#dc18dc" textAnchor="middle" fontSize="7" fontWeight="600">
        {GFI.map(([x, y, r]) => (
          <text key={`${x}-${y}`} x={x} y={y + 2} transform={`rotate(${r} ${x} ${y})`}>GFI</text>
        ))}
      </g>
    </g>
  );
}

function Drawing() {
  return (
    <main className="relative flex flex-1 flex-col bg-[#4f4f4f]">
      <svg viewBox="0 172 1920 785" className="block w-full flex-1" fontFamily="'Open Sans', sans-serif">
        <LeftPlan />
        <RightPlan />

        {/* rubber band from source to destination */}
        <path d="M545 807L992 824" stroke="#d09a30" strokeWidth="1.300" strokeDasharray="16 9" />
        <path d="M494 807H558M526 774V839" stroke="#fff" shapeRendering="crispEdges" />
        <path d="M511 797l20 20M531 797l-20 20" stroke="#ff862e" strokeWidth="9" />
        <path d="M985 817l14 14M999 817l-14 14" stroke="#ff862e" strokeWidth="7" />

        <g fill="#f98430" fontSize="45">
          <text x="117" y="872">Destination Point 1</text>
          <text x="1010" y="883">Source Point 1</text>
        </g>

        <g>
          <rect x="544" y="819" width="61" height="20" fill="#a3a3a3" stroke="#111" />
          <text x="574" y="833" fontSize="11" textAnchor="middle" fill="#111">Endpoint</text>
        </g>

        {/* UCS icon */}
        <path d="M15 941V890M15 941H66" fill="none" stroke="#f0f0f0" shapeRendering="crispEdges" />
        <g fill="#e8e8e8" fontSize="18" fontWeight="300" textAnchor="middle">
          <text x="23" y="886">Y</text>
          <text x="76" y="939">X</text>
        </g>
      </svg>
      <div className="absolute top-2.5 right-2.5 flex items-center gap-2 text-[#f0f0f0]">
        <button aria-label="Minimize drawing"><svg viewBox="0 0 12 12" className="h-3 w-3"><path d="M1 8h10v3H1z" fill="currentColor" stroke="#222" strokeWidth=".5" /></svg></button>
        <button aria-label="Restore drawing"><svg viewBox="0 0 12 12" className="h-3 w-3" fill="none" stroke="currentColor" strokeWidth="1.500"><path d="M1.500 4.500h6v6h-6zM4 2h7v7H8" /></svg></button>
        <button aria-label="Close drawing"><svg viewBox="0 0 12 12" className="h-3 w-3" stroke="currentColor" strokeWidth="2.500"><path d="M2 2l8 8M10 2l-8 8" /></svg></button>
      </div>
    </main>
  );
}

/* ---------- command line and status bar ---------- */

function CommandLine() {
  return (
    <div className="flex h-[55px] border-t-2 border-b border-t-[#6a6a6a] border-b-[#6a6a6a] font-['DejaVu_Sans_Mono','Liberation_Mono',monospace] text-black">
      <div className="flex w-[23px] shrink-0 flex-col items-center bg-linear-to-b from-[#7c7c7c] to-[#4a4a4a]">
        <svg viewBox="0 0 18 5" className="mt-[5px] h-[5px] w-[18px]" stroke="#c0c0c0" strokeWidth="2" strokeDasharray="2 1"><path d="M0 1h18M0 4h18" /></svg>
        <button aria-label="Close command line" className="mt-1">
          <svg viewBox="0 0 10 10" className="h-2.5 w-2.5" stroke="#fff" strokeWidth="2"><path d="M1 1l8 8M9 1L1 9" /></svg>
        </button>
        <button aria-label="Customize" className="mt-1">
          <svg viewBox="0 0 14 14" className="h-3.5 w-3.5" fill="none" stroke="#f4f4f4" strokeWidth="2.500"><path d="M6 6l7 7" /><path d="M3 1a3 3 0 1 0 4 4M1 3l2 2" strokeWidth="2" /></svg>
        </button>
      </div>
      <div className="flex flex-1 flex-col">
        <div className="flex h-[29px] items-end border-b border-[#6f6f6f] bg-[#c8c8c8] pb-px pl-0.5">Specify first source point:</div>
        <label className="flex flex-1 items-center bg-white pb-px pl-1.5">
          <svg viewBox="0 0 24 12" className="mr-1.5 h-3 w-6"><path d="M0 7h13v5H0z" fill="#8c8c8c" /><path d="M7 1h6v4H7z" fill="#e4e4e4" stroke="#aaa" /><path d="M0 7h13v2H0z" fill="#c9c9c9" /><path d="M18 6h6l-3 3z" fill="#888" /></svg>
          <strong className="mr-1">ALIGN</strong>
          <span>Specify first destination point:</span>
          <input aria-label="Command" className="flex-1 outline-none" />
        </label>
      </div>
    </div>
  );
}

function Cell({ className = "", children }: { className?: string; children: ReactNode }) {
  return <div className={`flex h-[27px] items-center justify-center border border-[#848484] ${className}`}>{children}</div>;
}

function Stat({ label, w = 16, children }: { label: string; w?: number; children: ReactNode }) {
  return (
    <button aria-label={label}>
      <svg viewBox={`0 0 ${w} 16`} className="h-4" style={{ width: w }} fill="none" stroke="#c4c4c4" strokeWidth="1.200">{children}</svg>
    </button>
  );
}

function StatusBar() {
  return (
    <footer className="flex h-[30px] items-start border-b border-black bg-[#373737]">
      <div className="flex pl-[11px]">
        <button className="h-[18px] w-[60px] rounded-b-lg bg-[#6d6d6d] font-bold text-white"><span className="block leading-4">Model</span></button>
        <button className="h-[18px] w-[76px] rounded-b-lg border-l border-[#3c3c3c] bg-[#535353] text-[#b5b5b5]"><span className="block leading-4">D-size Plot</span></button>
        <button aria-label="New layout" className="ml-1 flex h-4 w-[23px] items-center justify-center rounded-br-xl rounded-bl-sm bg-[#535353]">
          <svg viewBox="0 0 8 8" className="h-2 w-2" stroke="#cfcfcf" strokeWidth="2"><path d="M4 0v8M0 4h8" /></svg>
        </button>
      </div>
      <div className="ml-auto flex gap-px bg-[#505050] pr-px text-white">
        <Cell className="w-[49px]"><button className="text-[13px]">MODEL</button></Cell>
        <Cell className="w-[65px] gap-2">
          <Stat label="Grid"><path d="M3 1v14M6 1v14M9 1v14M12 1v14M1 4h14M1 8h14M1 12h14" strokeDasharray="2 1" /></Stat>
          <Stat label="Snap"><path d="M1 2h14M1 5h14M1 8h14M1 11h14M1 14h14" strokeDasharray="1 2" /></Stat>
          <Caret big />
        </Cell>
        <Cell className="w-[103px] gap-2">
          <Stat label="Ortho"><path d="M3 2v11h12M3 9h4v4" /></Stat>
          <Stat label="Polar"><circle cx="7" cy="8" r="6" /><path d="M7 8h9M7 8l5-4" /></Stat>
          <Caret big />
          <Stat label="Isometric"><path d="M8 0v16M1 1l14 14" /></Stat>
          <Caret big />
        </Cell>
        <Cell className="w-[65px] gap-2">
          <Stat label="Object tracking"><path d="M13 2L1 14h15" stroke="#2f8ff5" strokeWidth="2" /><path d="M5 7h4v4H5z" fill="#2f8ff5" stroke="none" /></Stat>
          <Stat label="Object snap"><path d="M3 4h12v10H3z" stroke="#2f8ff5" strokeWidth="2" /><path d="M1 1h5v5H1z" fill="#1ec81e" stroke="#063006" /></Stat>
          <Caret big />
        </Cell>
        <Cell className="w-[26px]">
          <Stat label="Annotation visibility"><path d="M7 1l2 6 6 7-6-2-2 3-2-3-5 2 5-7z" fill="#2f9bff" stroke="none" /><circle cx="12" cy="4" r="2.500" stroke="#2f9bff" strokeWidth="1.500" /></Stat>
        </Cell>
        <Cell className="w-[41px] gap-2">
          <Stat label="Workspace"><circle cx="8" cy="8" r="3.500" strokeWidth="3.500" /><path d="M8 1v3M8 12v3M1 8h3M12 8h3M3 3l2 2M11 11l2 2M13 3l-2 2M5 11l-2 2" strokeWidth="2" /></Stat>
          <Caret big />
        </Cell>
        <Cell className="w-[26px]">
          <Stat label="Units"><path d="M1 1h6v6H1zM7 9l4 6H3z" /><circle cx="12" cy="7" r="3" /></Stat>
        </Cell>
        <Cell className="w-[26px]">
          <Stat label="Performance"><circle cx="8" cy="8" r="7.500" fill="#07509a" stroke="#1a7ee0" /><path d="M8 11l4-4" stroke="#8fc8ff" /></Stat>
        </Cell>
        <Cell className="w-[70px] gap-1">
          <Stat label="Plot"><path d="M1 1h11l3 3v6H1z" fill="#dfe8ee" stroke="#26455e" /><path d="M1 8h8v6H1z" fill="#f0c93a" stroke="none" /><path d="M6 11l3 3 6-7" stroke="#35c026" strokeWidth="2.500" /><path d="M4 3v4M2 5h4" stroke="#26455e" /></Stat>
          <Stat label="Standards"><path d="M1 14V5h4V2h4v3h3l3 3v6zM3 5h4v4" stroke="#e8722a" strokeWidth="1.500" /></Stat>
          <Stat label="Notifications" w={20}><path d="M1 1h17v14H1z" fill="#f4f4f4" stroke="#222" /><path d="M1 13c6 0 4-9 8-9s3 9 8 9" stroke="#333" /><path d="M15 8l5 8H10z" fill="#e8641f" stroke="none" /><path d="M15 11v3" stroke="#fff" /></Stat>
        </Cell>
        <Cell className="w-[49px] gap-2">
          <Stat label="Full screen"><path d="M1 3h14v11H1zM9 8l3-3M9.500 5H12v2.500M7 9l-3 3M4 9.500V12h2.500" /></Stat>
          <Stat label="Menu"><path d="M0 3h16M0 8h16M0 13h16" strokeWidth="1.800" /></Stat>
        </Cell>
      </div>
    </footer>
  );
}

export default function App() {
  return (
    <div className="relative flex min-h-screen flex-col overflow-hidden bg-[#4f4f4f] font-['Open_Sans','Noto_Sans',sans-serif] text-[12px] leading-4">
      <TitleBar />
      <button aria-label="Application menu" className="absolute top-0 left-0 z-20 flex h-[41px] w-[41px] items-center justify-center gap-0.5 border border-black bg-linear-to-b from-[#e4e4e4] to-[#6b6b6b]">
        <svg viewBox="0 0 24 28" className="h-7 w-6" fill="none">
          <path d="M1 26L9 1h6l8 25h-6l-2-8C12 17 9 18 7 21l-1 5z" fill="#c32a2f" />
          <path d="M9 1L1 26h5L12 9z" fill="#8e161b" /><path d="M12 8l2 6-5 2z" fill="#b9b9b9" /><path d="M6 20c3-4 7-5 11-4l1 4c-5-1-9 0-12 4z" fill="#e2575a" />
        </svg>
        <svg viewBox="0 0 6 3" className="h-1 w-1.5" fill="#333"><path d="M0 0h6L3 3z" /></svg>
      </button>
      <RibbonTabs />
      <Ribbon />
      <FileTabs />
      <Drawing />
      <CommandLine />
      <StatusBar />
    </div>
  );
}
